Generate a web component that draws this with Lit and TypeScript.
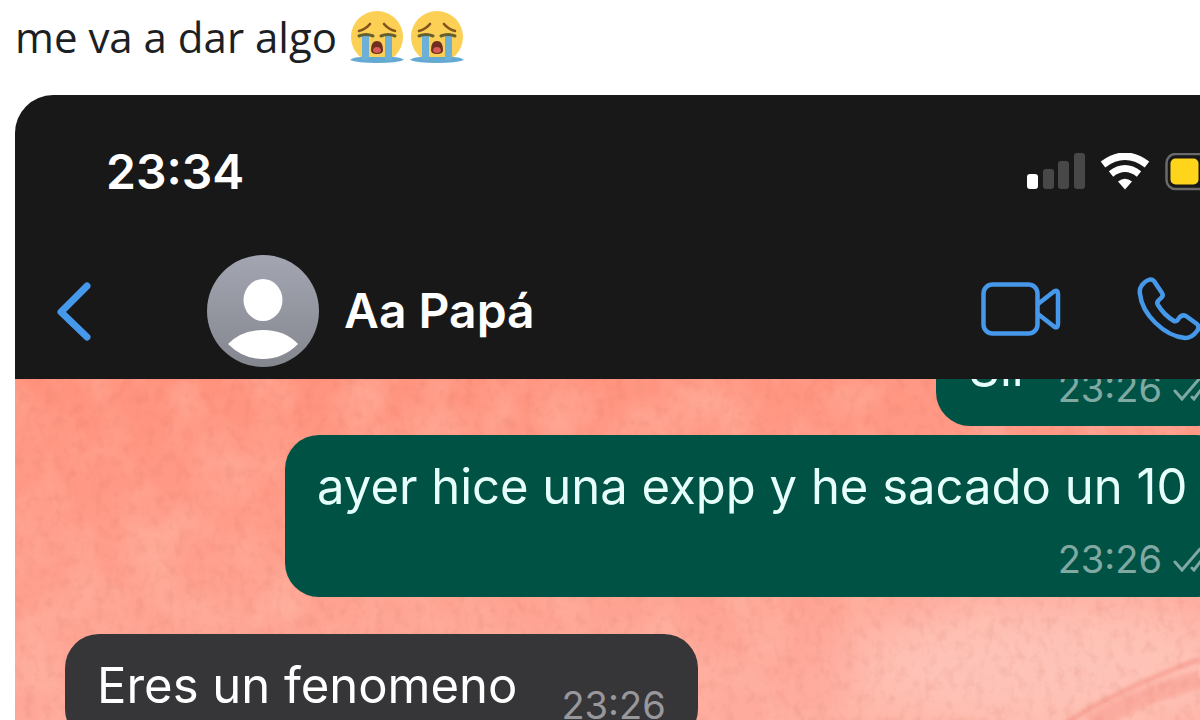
import { LitElement, html, css, svg } from "lit";
import { customElement, property } from "lit/decorators.js";

@customElement("chat-bubble")
export class ChatBubble extends LitElement {
  @property() text = "";
  @property() time = "";
  @property({ type: Boolean, reflect: true }) sent = false;
  @property({ type: Boolean, reflect: true }) stacked = false;

  static styles = css`
    :host {
      display: flex;
      align-items: flex-start;
      gap: 44px;
      box-sizing: border-box;
      padding: 20px 32px 16px;
      border-radius: 34px;
      background: #363538;
      color: #fff;
      font-size: 49px;
      line-height: 64px;
      white-space: nowrap;
    }
    :host([sent]) { gap: 34px; padding-right: 18px; background: #005245; color: #e6fffa; }
    :host([stacked]) { flex-direction: column; align-items: stretch; gap: 0; }
    .meta {
      display: flex;
      justify-content: flex-end;
      align-items: center;
      gap: 10px;
      margin-top: 29px;
      font-size: 38px;
      line-height: 44px;
      color: #98979b;
    }
    :host([sent]) .meta { color: #7fa9a2; }
    :host([stacked]) .meta { margin-top: 18px; }
    .ticks { width: 40px; height: 26px; flex: none; }
  `;

  render() {
    return html`
      <span>${this.text}</span>
      <span class="meta">
        <time>${this.time}</time>
        ${this.sent
          ? html`<svg class="ticks" viewBox="0 0 40 26" fill="none" stroke="currentColor" stroke-width="3" stroke-linecap="round" aria-hidden="true">
              <path d="M3 16L10 24L28 3M20 22L22 24L38 3" />
            </svg>`
          : ""}
      </span>
    `;
  }
}

@customElement("app-root")
export class AppRoot extends LitElement {
  static styles = css`
    :host {
      display: block;
      height: 100vh;
      overflow: hidden;
      background: #fff;
      font-family: Inter, "Liberation Sans", sans-serif;
    }
    .post { display: flex; flex-direction: column; height: 100%; padding-left: 15px; }
    .caption {
      display: flex;
      align-items: center;
      gap: 6px;
      margin: 0;
      padding: 9px 0 30px;
      font: 400 42px/56px "Open Sans", sans-serif;
      color: #1c1f23;
      white-space: nowrap;
    }
    .caption span { margin-right: 7px; }
    .emoji { width: 54px; height: 52px; flex: none; }
    .shot {
      flex: 1;
      display: flex;
      flex-direction: column;
      min-height: 0;
      margin-right: -70px;
      border-top-left-radius: 38px;
      overflow: hidden;
      background: #181818;
    }
    .status {
      display: flex;
      align-items: center;
      gap: 15px;
      padding: 46px 33px 0 91px;
      color: #fff;
      font-size: 48px;
      font-weight: 600;
      line-height: 62px;
    }
    .status time { flex: 1; }
    .signal { width: 58px; height: 38px; }
    .wifi { width: 50px; height: 38px; }
    .battery { width: 72px; height: 38px; }
    .head {
      display: flex;
      align-items: center;
      padding: 52px 69px 12px 41px;
      color: #fff;
    }
    button { display: flex; padding: 0; border: 0; background: none; color: #4598ea; }
    .back { margin-right: 115px; }
    .avatar { width: 112px; height: 112px; }
    h1 { flex: 1; margin: 0 0 0 25px; font-size: 48px; line-height: 60px; font-weight: 600; }
    .video { margin-right: 76px; }
    .chat {
      flex: 1;
      position: relative;
      display: flex;
      flex-direction: column;
      align-items: flex-end;
      min-height: 0;
      overflow: hidden;
      padding: 0 40px 0 50px;
    }
    .paper { position: absolute; inset: 0; width: 100%; height: 100%; }
    chat-bubble { position: relative; flex: none; }
    .first { margin-top: -62px; }
    .second { width: 945px; margin-top: 9px; }
    .reply { align-self: flex-start; margin-top: 37px; }
  `;

  private emoji() {
    return html`<svg class="emoji" viewBox="0 0 54 52" role="img" aria-label="😭">
      <circle cx="27" cy="26" r="26" fill="#fccf55" />
      <path d="M0 49q3-3 12-3h30q9 0 12 3q-7 3-27 3t-27-3z" fill="#64a9d2" />
      <path d="M12 25h7v24h-7zM35 25h7v24h-7z" fill="#6cb0d8" />
      <path d="M9 20Q16 18 20 13M45 20Q38 18 34 13" fill="none" stroke="#80541c" stroke-width="2.6" stroke-linecap="round" />
      <path d="M9 25q7-3 14 0M31 25q7-3 14 0" fill="none" stroke="#66602f" stroke-width="3" stroke-linecap="round" />
      <path d="M21 39q0-9 6-9t6 9q0 4-6 4t-6-4z" fill="#6e2f20" />
      <path d="M23 40q0-4 4-4t4 4q-1 2-4 2t-4-2z" fill="#d65c55" />
    </svg>`;
  }

  private paper() {
    return svg`
      <svg class="paper" preserveAspectRatio="none" viewBox="0 0 1255 341" aria-hidden="true">
        <defs>
          <linearGradient id="base" x1="0" y1="0" x2="0.25" y2="1">
            <stop offset="0" stop-color="#ff927d" />
            <stop offset="0.5" stop-color="#ff9d8b" />
            <stop offset="1" stop-color="#feaa9c" />
          </linearGradient>
          <filter id="cloud" x="0" y="0" width="100%" height="100%" color-interpolation-filters="sRGB">
            <feTurbulence type="fractalNoise" baseFrequency="0.018 0.016" numOctaves="5" seed="21" />
            <feColorMatrix values="0 0 0 0 1  0 0 0 0 0.78  0 0 0 0 0.71  2 0 0 0 -0.8" />
          </filter>
          <filter id="grain" x="0" y="0" width="100%" height="100%" color-interpolation-filters="sRGB">
            <feTurbulence type="fractalNoise" baseFrequency="0.1 0.08" numOctaves="4" seed="3" />
            <feColorMatrix values="0 0 0 0 0.8  0 0 0 0 0.42  0 0 0 0 0.34  1.6 0 0 0 -0.75" />
          </filter>
          <filter id="soft" x="-50%" y="-80%" width="200%" height="260%"><feGaussianBlur stdDeviation="30" /></filter>
          <filter id="edge" x="-10%" y="-50%" width="120%" height="200%"><feGaussianBlur stdDeviation="2" /></filter>
        </defs>
        <rect width="1255" height="341" fill="url(#base)" />
        <ellipse cx="1040" cy="290" rx="210" ry="70" fill="#fec3b8" filter="url(#soft)" />
        <rect width="1255" height="341" filter="url(#cloud)" opacity="0.4" />
        <path d="M1050 345Q1100 312 1185 280" fill="none" stroke="#f58f82" stroke-width="4" opacity="0.8" filter="url(#edge)" />
        <path d="M1075 345Q1120 318 1185 300" fill="none" stroke="#fa9f92" stroke-width="18" opacity="0.6" filter="url(#edge)" />
        <rect width="1255" height="341" filter="url(#grain)" opacity="0.22" />
      </svg>`;
  }

  render() {
    return html`
      <article class="post">
        <p class="caption"><span>me va a dar algo</span>${this.emoji()}${this.emoji()}</p>
        <section class="shot">
          <div class="status">
            <time>23:34</time>
            <svg class="signal" viewBox="0 0 58 38" aria-hidden="true">
              <rect x="0" y="21" width="11" height="15" rx="3" fill="#fff" />
              <g fill="#484848">
                <rect x="16" y="16" width="11" height="20" rx="3" />
                <rect x="31" y="8" width="11" height="28" rx="3" />
                <rect x="47" y="0" width="11" height="36" rx="3" />
              </g>
            </svg>
            <svg class="wifi" viewBox="0 0 50 38" aria-hidden="true">
              <path d="M3 11.500Q25-5 47 11.500" fill="none" stroke="#fff" stroke-width="7.500" />
              <path d="M11 21Q25 10 39 21" fill="none" stroke="#fff" stroke-width="7" />
              <path d="M18 28.500Q25 23 32 28.500L25 36.500Z" fill="#fff" />
            </svg>
            <svg class="battery" viewBox="0 0 72 38" aria-hidden="true">
              <rect x="1.500" y="1" width="65" height="35" rx="9" fill="none" stroke="#6a6a6a" stroke-width="2.500" />
              <rect x="5.500" y="5.500" width="28" height="26" rx="5" fill="#ffd51c" />
              <path d="M69 13q3 1 3 6t-3 6z" fill="#6a6a6a" />
            </svg>
          </div>
          <header class="head">
            <button class="back" aria-label="Atrás">
              <svg width="36" height="62" viewBox="0 0 36 62" fill="none" stroke="currentColor" stroke-width="7" stroke-linecap="round" stroke-linejoin="round">
                <path d="M31 6L5 32L31 57" />
              </svg>
            </button>
            <svg class="avatar" viewBox="0 0 112 112" aria-hidden="true">
              <defs>
                <linearGradient id="av" x1="0" y1="0" x2="0" y2="1">
                  <stop offset="0" stop-color="#a3a6b1" /><stop offset="1" stop-color="#85878f" />
                </linearGradient>
              </defs>
              <circle cx="56" cy="56" r="56" fill="url(#av)" />
              <ellipse cx="56" cy="45" rx="19.500" ry="21" fill="#fff" />
              <path d="M21 89Q34 75 56 75T91 89Q76 104 56 104T21 89z" fill="#fff" />
            </svg>
            <h1>Aa Papá</h1>
            <button class="video" aria-label="Videollamada">
              <svg width="80" height="58" viewBox="0 0 80 58" fill="none" stroke="currentColor" stroke-width="4.500" stroke-linejoin="round">
                <rect x="2.500" y="2.500" width="54" height="49" rx="9" />
                <path d="M57 22L73 9.500Q77 7 77 12V42Q77 47 73 44.500L57 32" />
              </svg>
            </button>
            <button class="call" aria-label="Llamar">
              <svg width="64" height="68" viewBox="0 0 64 68" fill="none" stroke="currentColor" stroke-width="4.500" stroke-linejoin="round">
                <path d="M5 8C9 3 14 1 17 4L25 16Q27 19 23 22Q19 25 21 28Q27 38 37 44Q40 45 42 41Q45 37 49 39L60 47Q63 50 60 54Q55 61 48 61C27 59 5 37 3 17Q2 12 5 8z" />
              </svg>
            </button>
          </header>
          <main class="chat">
            ${this.paper()}
            <chat-bubble class="first" sent text="Sii" time="23:26"></chat-bubble>
            <chat-bubble class="second" sent stacked text="ayer hice una expp y he sacado un 10" time="23:26"></chat-bubble>
            <chat-bubble class="reply" text="Eres un fenomeno" time="23:26"></chat-bubble>
          </main>
        </section>
      </article>
    `;
  }
}
